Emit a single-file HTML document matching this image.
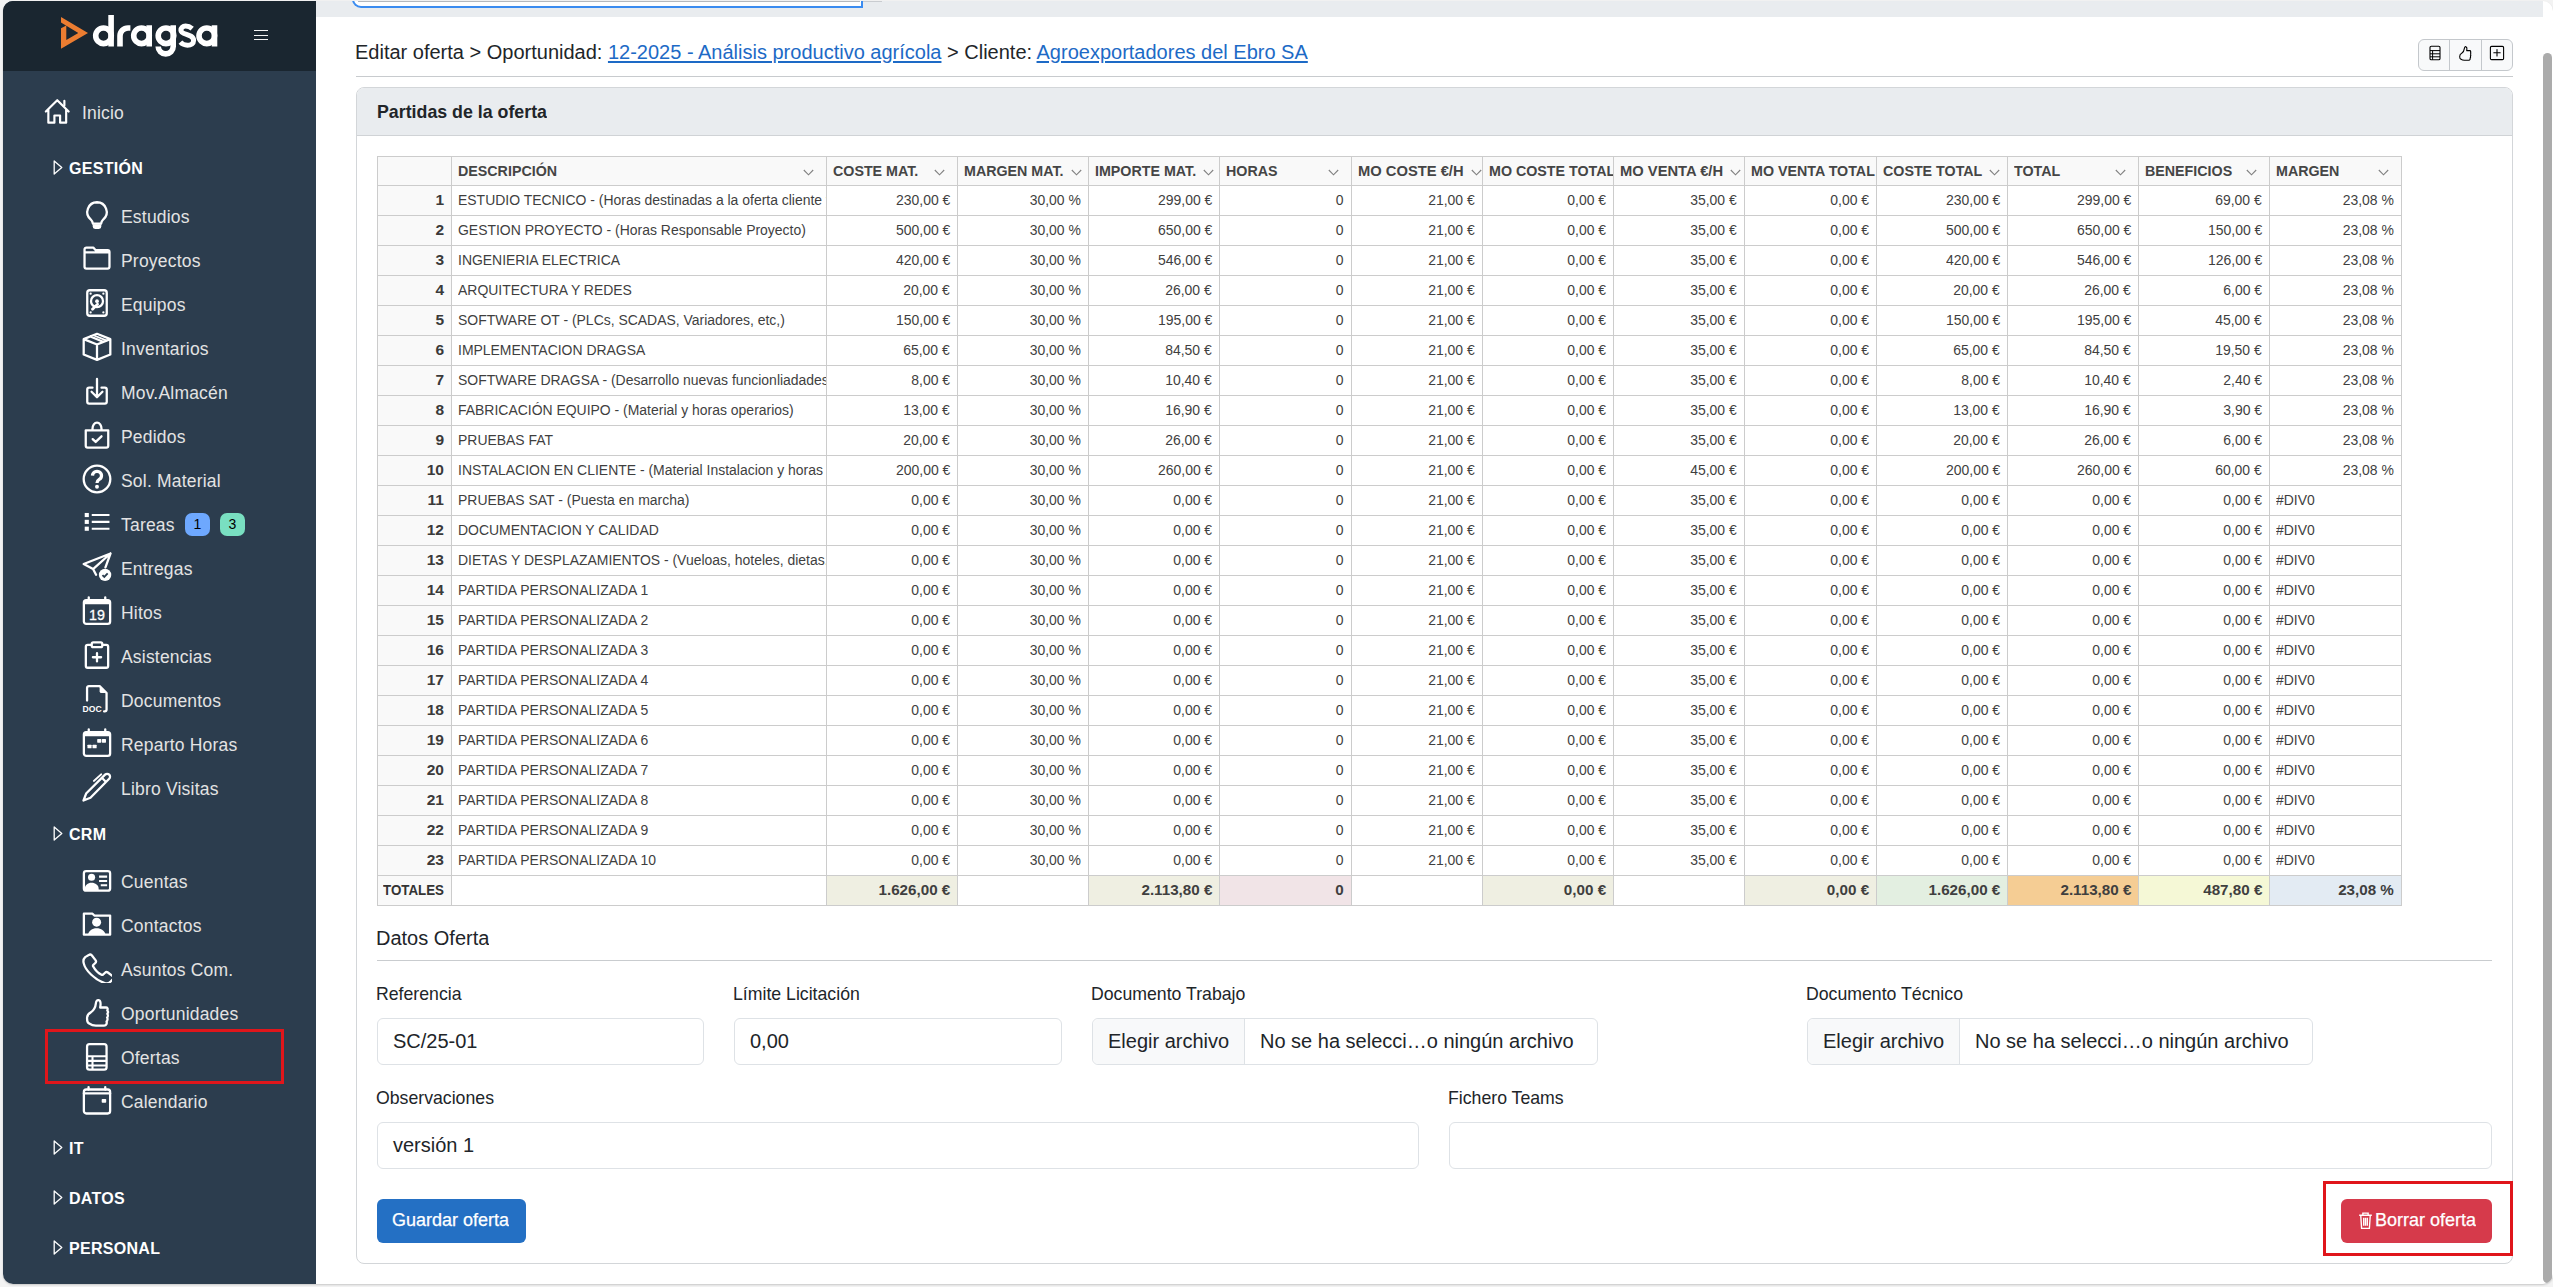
<!DOCTYPE html>
<html lang="es"><head><meta charset="utf-8"><title>Editar oferta</title>
<style>
*{box-sizing:border-box;margin:0;padding:0}
html,body{width:2553px;height:1287px;overflow:hidden;background:#f3f3f3;font-family:"Liberation Sans", sans-serif}
.abs{position:absolute}
#win{position:absolute;left:3px;top:1px;width:2550px;height:1283px;border-radius:10px;overflow:hidden;background:#fff;box-shadow:0 1px 2px rgba(0,0,0,.18)}
#sb{position:absolute;left:0;top:0;width:313px;height:1283px;background:#2c3d4e}
#sbh{position:absolute;left:0;top:0;width:313px;height:70px;background:#1a2630}
.it{position:absolute;left:118px;font-size:17.5px;color:#e3e3e3;white-space:nowrap;line-height:20px;letter-spacing:.2px}
.sec{position:absolute;left:66px;font-size:16px;font-weight:700;color:#fff;white-space:nowrap;line-height:20px;letter-spacing:.3px}
.ic{position:absolute;width:28px;height:28px}
.ic svg{width:100%;height:100%;display:block}
.tri{position:absolute;left:49.5px;width:10px;height:15px}
.badge{position:absolute;width:25px;height:23px;border-radius:7px;font-size:14px;font-weight:400;color:#000;text-align:center;line-height:23px}
.t{position:absolute;white-space:nowrap;overflow:hidden}

.tc{position:absolute;white-space:nowrap;font-size:15.5px;color:#3f3f3f;line-height:18px}
.tl{transform:scaleX(.9);transform-origin:0 50%}
.tr{transform:scaleX(.9);transform-origin:100% 50%;text-align:right}
.th{position:absolute;white-space:nowrap;font-size:15.5px;font-weight:700;color:#454545;line-height:18px;transform:scaleX(.92);transform-origin:0 50%}
.tb{font-weight:700;transform:scaleX(.88)}

.lbl{position:absolute;white-space:nowrap;font-size:17.7px;color:#212529;line-height:20px}
.inp{position:absolute;border:1px solid #dee2e6;border-radius:6px;background:#fff}
.itx{position:absolute;white-space:nowrap;font-size:20px;color:#212529;line-height:24px}
.fbtn{position:absolute;left:0;top:0;bottom:0;background:#f8f9fa;border-right:1px solid #dee2e6;border-radius:6px 0 0 6px}
</style></head><body>
<div id="win"><div id="sb"><div id="sbh"></div><svg class="abs" style="left:56px;top:14px" width="170" height="46" viewBox="0 0 170 46">
<path d="M2 2 L29 17.9 L2 33.8 Z M2 7.4 L19.3 18.1 L7.3 24.9 L7.3 10.6 L2 13.3 Z" fill="#ec7d31" fill-rule="evenodd"/>
<g fill="none" stroke="#fff" stroke-width="5.6" stroke-linecap="butt">
<circle cx="44.5" cy="20.8" r="7.8"/><path d="M52.1 0 V31.4"/>
<path d="M61 31.4 V21 A8 8 0 0 1 69 13 H71.4"/>
<circle cx="82.5" cy="20.8" r="7.8"/><path d="M90.2 10.2 V31.4"/>
<circle cx="107" cy="20.8" r="7.8"/><path d="M114.2 10.2 V31.4 A7.5 7.5 0 0 1 99.2 31.4"/>
<path stroke-width="5" d="M133.2 13.6 C131.2 11.9 128.8 11 126.6 11 C123.6 11 121.9 12.8 121.9 15.2 C121.9 20.2 134.6 18.6 134.6 25.4 C134.6 28.4 132.2 30.2 128.4 30.2 C125.6 30.2 123.2 29.2 121.4 27.2"/>
<circle cx="147.8" cy="20.8" r="7.8"/><path d="M155.5 10.2 V31.4"/>
</g>
</svg><div class="abs" style="left:251px;top:29px;width:14px;height:1px;background:#f4f4f4"></div><div class="abs" style="left:251px;top:34px;width:14px;height:1px;background:#f4f4f4"></div><div class="abs" style="left:251px;top:38px;width:14px;height:1px;background:#f4f4f4"></div><div class="ic" style="left:39.5px;top:96px;width:28.5px;height:28.5px"><svg viewBox="0 0 16 16" width="28.5" height="28.5"><path fill="none" stroke="#fff" stroke-width="1.22" stroke-linecap="round" stroke-linejoin="round" d="M1.6 8.2 L8 1.8 L14.4 8.2 M3 6.8 V14.4 H6.4 V10.4 H9.6 V14.4 H13 V6.8"/><path fill="none" stroke="#fff" stroke-width="1.22" stroke-linecap="round" stroke-linejoin="round" d="M12 2.2 V4.8"/></svg></div><div class="it" style="left:79px;top:102px">Inicio</div><svg class="tri" style="top:159px" viewBox="0 0 10 15"><path d="M1.2 1 L8.8 7.5 L1.2 14 Z" fill="none" stroke="#fff" stroke-width="1.3" stroke-linejoin="round"/></svg><div class="sec" style="top:158px">GESTIÓN</div><div class="ic" style="left:79.1px;top:199px;width:30px;height:30px"><svg viewBox="0 0 16 16" width="30" height="30"><path fill="none" stroke="#fff" stroke-width="1.22" stroke-linecap="round" stroke-linejoin="round" d="M8 1.2 a5.2 5.2 0 0 0-3.4 9.1 c.7.7 1.1 1.5 1.2 2.3 h4.4 c.1-.8.5-1.6 1.2-2.3 A5.2 5.2 0 0 0 8 1.2z"/><path fill="#fff" d="M5.7 12.9 h4.6 v1.2 a1.3 1.3 0 0 1-1.3 1.3 h-2 a1.3 1.3 0 0 1-1.3-1.3z"/></svg></div><div class="it" style="top:206px">Estudios</div><div class="ic" style="left:79.1px;top:243px;width:30px;height:30px"><svg viewBox="0 0 16 16" width="30" height="30"><path fill="none" stroke="#fff" stroke-width="1.22" stroke-linecap="round" stroke-linejoin="round" d="M1.35 12.1 V2.9 a1 1 0 0 1 1-1 H6 l1.3 1.4 H13.65 a1 1 0 0 1 1 1 V12.1 a1 1 0 0 1-1 1 H2.35 a1 1 0 0 1-1-1z M1.35 4.5 H14.65"/></svg></div><div class="it" style="top:250px">Proyectos</div><div class="ic" style="left:79.1px;top:287px;width:30px;height:30px"><svg viewBox="0 0 16 16" width="30" height="30"><rect fill="none" stroke="#fff" stroke-width="1.22" stroke-linecap="round" stroke-linejoin="round" x="2.8" y="1.2" width="10.4" height="13.6" rx="1.4"/><circle fill="none" stroke="#fff" stroke-width="1.22" stroke-linecap="round" stroke-linejoin="round" cx="8" cy="7" r="3.2"/><circle fill="#fff" cx="8" cy="7" r="1"/><path fill="none" stroke="#fff" stroke-width="1.5" stroke-linecap="round" d="M8.3 8.6 L5.6 11.3"/><circle fill="#fff" cx="4.6" cy="3" r=".6"/><circle fill="#fff" cx="11.4" cy="3" r=".6"/><circle fill="#fff" cx="4.6" cy="13" r=".6"/><circle fill="#fff" cx="11.4" cy="13" r=".6"/></svg></div><div class="it" style="top:294px">Equipos</div><div class="ic" style="left:79.1px;top:331px;width:30px;height:30px"><svg viewBox="0 0 16 16" width="30" height="30"><path fill="none" stroke="#fff" stroke-width="1.22" stroke-linecap="round" stroke-linejoin="round" d="M8 0.95 L15.1 3.8 V12 L8 14.85 L0.9 12 V3.8 Z M0.9 3.8 L8 6.7 L15.1 3.8 M8 6.7 V14.85 M4.45 2.4 L11.55 5.3"/><path fill="none" stroke="#fff" stroke-width=".9" d="M6.1 1.7 L13.2 4.6"/></svg></div><div class="it" style="top:338px">Inventarios</div><div class="ic" style="left:79.1px;top:375px;width:30px;height:30px"><svg viewBox="0 0 16 16" width="30" height="30"><path fill="none" stroke="#fff" stroke-width="1.22" stroke-linecap="round" stroke-linejoin="round" d="M5.6 6.2 H3.8 a1 1 0 0 0-1 1 V13.75 a1 1 0 0 0 1 1 H12.2 a1 1 0 0 0 1-1 V7.2 a1 1 0 0 0-1-1 H10.4 M8 1.6 V11.2 M5.1 8.4 L8 11.3 L10.9 8.4"/></svg></div><div class="it" style="top:382px">Mov.Almacén</div><div class="ic" style="left:79.1px;top:419px;width:30px;height:30px"><svg viewBox="0 0 16 16" width="30" height="30"><path fill="none" stroke="#fff" stroke-width="1.22" stroke-linecap="round" stroke-linejoin="round" d="M2 5.5 H14 V13.7 a1 1 0 0 1-1 1 H3 a1 1 0 0 1-1-1 Z M5.6 5.5 V4.7 a2.4 3.3 0 0 1 4.8 0 V5.5 M5.7 10.2 L7.3 11.7 L10.4 8.7"/></svg></div><div class="it" style="top:426px">Pedidos</div><div class="ic" style="left:79.1px;top:463px;width:30px;height:30px"><svg viewBox="0 0 16 16" width="30" height="30"><circle fill="none" stroke="#fff" stroke-width="1.22" stroke-linecap="round" stroke-linejoin="round" cx="8" cy="8" r="7.1"/><path fill="none" stroke="#fff" stroke-width="1.75" d="M5.6 6.2 a2.4 2.3 0 1 1 3.6 2 c-.8.5-1.2.9-1.2 1.9"/><circle fill="#fff" cx="8" cy="12.1" r="1.05"/></svg></div><div class="it" style="top:470px">Sol. Material</div><div class="ic" style="left:79.1px;top:507px;width:30px;height:30px"><svg viewBox="0 0 16 16" width="30" height="30"><path fill="none" stroke="#fff" stroke-width="1.15" d="M5.2 3.75 H14.65 M5.2 7.4 H14.65 M5.2 11.05 H14.65"/><rect fill="#fff" x="1.45" y="2.65" width="2.2" height="2.2"/><rect fill="#fff" x="1.45" y="6.3" width="2.2" height="2.2"/><rect fill="#fff" x="1.45" y="9.95" width="2.2" height="2.2"/></svg></div><div class="it" style="top:514px">Tareas</div><div class="ic" style="left:79.1px;top:551px;width:30px;height:30px"><svg viewBox="0 0 16 16" width="30" height="30"><path fill="none" stroke="#fff" stroke-width="1.22" stroke-linecap="round" stroke-linejoin="round" d="M15.2 0.8 L0.9 6.4 L5.9 9.1 L7.5 12.1 M15.2 0.8 L5.9 9.1 M15.2 0.8 L12.5 8.2"/><circle fill="#fff" cx="12.3" cy="12.2" r="3.3"/><path fill="none" stroke="#2c3d4e" stroke-width="1" d="M10.9 12.3 L11.9 13.3 L13.7 11.4"/></svg></div><div class="it" style="top:558px">Entregas</div><div class="ic" style="left:79.1px;top:595px;width:30px;height:30px"><svg viewBox="0 0 16 16" width="30" height="30"><rect fill="none" stroke="#fff" stroke-width="1.22" stroke-linecap="round" stroke-linejoin="round" x="1" y="2.2" width="14" height="12.65" rx="1.3"/><path fill="#fff" d="M1 3.1 a1.3 1.3 0 0 1 1.3-1.3 h11.4 a1.3 1.3 0 0 1 1.3 1.3 V4.4 H1z"/><path fill="none" stroke="#fff" stroke-width="1.22" stroke-linecap="round" stroke-linejoin="round" d="M3.6 0.7 V2 M12.4 0.7 V2"/><text x="8" y="12.9" font-family="Liberation Sans" font-size="7.6" text-anchor="middle" fill="#fff" stroke="#fff" stroke-width=".15">19</text></svg></div><div class="it" style="top:602px">Hitos</div><div class="ic" style="left:79.1px;top:639px;width:30px;height:30px"><svg viewBox="0 0 16 16" width="30" height="30"><path fill="none" stroke="#fff" stroke-width="1.22" stroke-linecap="round" stroke-linejoin="round" d="M4.8 2.6 H3.05 a1 1 0 0 0-1 1 V13.8 a1 1 0 0 0 1 1 H12.95 a1 1 0 0 0 1-1 V3.6 a1 1 0 0 0-1-1 H11.2"/><rect fill="none" stroke="#fff" stroke-width="1.2" x="5.2" y="1.2" width="5.6" height="2.6" rx=".8"/><path fill="none" stroke="#fff" stroke-width="1.22" stroke-linecap="round" stroke-linejoin="round" d="M8 7 V11.4 M5.8 9.2 H10.2"/></svg></div><div class="it" style="top:646px">Asistencias</div><div class="ic" style="left:79.1px;top:683px;width:30px;height:30px"><svg viewBox="0 0 16 16" width="30" height="30"><path fill="none" stroke="#fff" stroke-width="1.22" stroke-linecap="round" stroke-linejoin="round" d="M2.7 8.8 V2.1 a1 1 0 0 1 1-1 H9.4 L13.1 4.8 V13.6 a1 1 0 0 1-1 1 H11.8"/><path fill="#fff" d="M9.4 1.1 V3.8 a1 1 0 0 0 1 1 H13.1z"/><text x="0.25" y="15.1" font-family="Liberation Sans" font-weight="700" font-size="4.6" fill="#fff">DOC</text></svg></div><div class="it" style="top:690px">Documentos</div><div class="ic" style="left:79.1px;top:727px;width:30px;height:30px"><svg viewBox="0 0 16 16" width="30" height="30"><rect fill="none" stroke="#fff" stroke-width="1.22" stroke-linecap="round" stroke-linejoin="round" x="1" y="2.2" width="14" height="12.65" rx="1.3"/><path fill="#fff" d="M1 3.1 a1.3 1.3 0 0 1 1.3-1.3 h11.4 a1.3 1.3 0 0 1 1.3 1.3 V4.4 H1z"/><path fill="none" stroke="#fff" stroke-width="1.22" stroke-linecap="round" stroke-linejoin="round" d="M3.6 0.7 V2 M12.4 0.7 V2"/><rect fill="#fff" x="8.1" y="5.9" width="2.2" height="1.9" rx=".3"/><rect fill="#fff" x="10.6" y="5.9" width="2.2" height="1.9" rx=".3"/><rect fill="#fff" x="2.9" y="8.9" width="2.2" height="1.9" rx=".3"/><rect fill="#fff" x="5.6" y="8.9" width="2.2" height="1.9" rx=".3"/></svg></div><div class="it" style="top:734px">Reparto Horas</div><div class="ic" style="left:79.1px;top:771px;width:30px;height:30px"><svg viewBox="0 0 16 16" width="30" height="30"><path fill="none" stroke="#fff" stroke-width="1.22" stroke-linecap="round" stroke-linejoin="round" d="M12.3 1.4 a1.5 1.5 0 0 1 2.2 2.2 L4.5 13.7 L0.8 15.2 L2.2 11.5 Z M10.6 3.1 L12.8 5.3"/><path fill="none" stroke="#fff" stroke-width=".9" stroke-linecap="round" d="M6.3 4.8 L10.3 1.2"/></svg></div><div class="it" style="top:778px">Libro Visitas</div><div class="badge" style="left:182px;top:512px;background:#6ea8fe">1</div><div class="badge" style="left:217px;top:512px;background:#79dfc1">3</div><svg class="tri" style="top:825px" viewBox="0 0 10 15"><path d="M1.2 1 L8.8 7.5 L1.2 14 Z" fill="none" stroke="#fff" stroke-width="1.3" stroke-linejoin="round"/></svg><div class="sec" style="top:824px">CRM</div><div class="ic" style="left:79.1px;top:864px;width:30px;height:30px"><svg viewBox="0 0 16 16" width="30" height="30"><rect fill="none" stroke="#fff" stroke-width="1.22" stroke-linecap="round" stroke-linejoin="round" x="1" y="3.3" width="14" height="10.4" rx="1.2"/><circle fill="#fff" cx="5.1" cy="6.5" r="1.9"/><path fill="#fff" d="M1.5 13.7 V12.6 c0-1.9 1.6-3.2 3.6-3.2 s3.8 1.3 3.8 3.2 V13.7z"/><path fill="none" stroke="#fff" stroke-width="1.1" d="M9.1 6.2 H13.4 M9.1 8.5 H13.4 M10 10.8 H13.4"/></svg></div><div class="it" style="top:871px">Cuentas</div><div class="ic" style="left:79.1px;top:908px;width:30px;height:30px"><svg viewBox="0 0 16 16" width="30" height="30"><path fill="none" stroke="#fff" stroke-width="1.22" stroke-linecap="round" stroke-linejoin="round" d="M1 2.5 H5.6 L6.6 3.5 H15 V13.7 H1 Z"/><circle fill="#fff" cx="7.8" cy="7" r="2.4"/><path fill="#fff" d="M3.2 13.7 c.4-2.2 2.2-3.5 4.6-3.5 s4.3 1.3 4.8 3.5z"/></svg></div><div class="it" style="top:915px">Contactos</div><div class="ic" style="left:79.1px;top:952px;width:30px;height:30px"><svg viewBox="0 0 16 16" width="30" height="30"><path fill="none" stroke="#fff" stroke-width="1.22" stroke-linecap="round" stroke-linejoin="round" d="M3.6 1.1 c.5-.4 1.2-.3 1.6.1 l2 2.6 c.4.5.3 1.1-.1 1.5 l-1 1 c-.3.3-.3.6-.1.9 c1 1.9 2.4 3.4 4.4 4.4 c.3.2.6.1.9-.1 l1-1 c.4-.4 1-.5 1.5-.1 l2.6 2 c.5.4.5 1.1.1 1.6 l-1.2 1.2 c-.8.8-2.1 1.2-3.2.8 C6.8 14.3 1.7 9.2.9 5.4 c-.3-1.1 0-2.4.8-3.2z"/></svg></div><div class="it" style="top:959px">Asuntos Com.</div><div class="ic" style="left:79.1px;top:996px;width:30px;height:30px"><svg viewBox="0 0 16 16" width="30" height="30"><path fill="none" stroke="#fff" stroke-width="1.22" stroke-linecap="round" stroke-linejoin="round" d="M8.9 1.7 C9.9 1.9 10.1 3.4 9.7 5.6 H12.9 C13.8 5.6 13.8 6.5 13.5 7.2 C13.9 7.6 13.9 8.5 13.5 9 C13.9 9.5 13.9 10.5 13.4 11 C13.8 11.5 13.6 12.6 13.1 13 C13.4 14 13 15.3 11.8 15.3 H7.4 C5.8 15.3 4.5 14.6 3.6 14 C2.9 13.6 2.7 12.5 2.7 11.4 C2.7 10 3.4 8.8 4.7 8.2 C6.3 7.1 7.2 5.3 7.4 3.4 C7.5 2.2 8.1 1.5 8.9 1.7z"/></svg></div><div class="it" style="top:1003px">Oportunidades</div><div class="ic" style="left:79.1px;top:1040px;width:30px;height:30px"><svg viewBox="0 0 16 16" width="30" height="30"><rect fill="none" stroke="#fff" stroke-width="1.22" stroke-linecap="round" stroke-linejoin="round" x="2.7" y="1.7" width="10.4" height="13.6" rx="1.3"/><path fill="none" stroke="#fff" stroke-width="1.1" d="M2.7 8.1 H13.1 M2.7 10.6 H13.1 M2.7 13.1 H13.1 M5.6 8.1 V15.3"/></svg></div><div class="it" style="top:1047px">Ofertas</div><div class="ic" style="left:79.1px;top:1084px;width:30px;height:30px"><svg viewBox="0 0 16 16" width="30" height="30"><rect fill="none" stroke="#fff" stroke-width="1.22" stroke-linecap="round" stroke-linejoin="round" x="1" y="2.4" width="14" height="12.8" rx="1.3"/><path fill="none" stroke="#fff" stroke-width="1.22" stroke-linecap="round" stroke-linejoin="round" d="M1 4.5 H15 M3.5 1.1 V2.4 M12.4 1.1 V2.4"/><rect fill="#fff" x="10.5" y="7.5" width="2.4" height="1.9" rx=".4"/></svg></div><div class="it" style="top:1091px">Calendario</div><svg class="tri" style="top:1139px" viewBox="0 0 10 15"><path d="M1.2 1 L8.8 7.5 L1.2 14 Z" fill="none" stroke="#fff" stroke-width="1.3" stroke-linejoin="round"/></svg><div class="sec" style="top:1138px">IT</div><svg class="tri" style="top:1189px" viewBox="0 0 10 15"><path d="M1.2 1 L8.8 7.5 L1.2 14 Z" fill="none" stroke="#fff" stroke-width="1.3" stroke-linejoin="round"/></svg><div class="sec" style="top:1188px">DATOS</div><svg class="tri" style="top:1239px" viewBox="0 0 10 15"><path d="M1.2 1 L8.8 7.5 L1.2 14 Z" fill="none" stroke="#fff" stroke-width="1.3" stroke-linejoin="round"/></svg><div class="sec" style="top:1238px">PERSONAL</div><div class="abs" style="left:42px;top:1028px;width:239px;height:55px;border:3px solid #e0161b"></div></div><div class="abs" style="left:313px;top:0;width:2227px;height:16px;background:#e9ecef"></div><div class="abs" style="left:349px;top:-10px;width:511px;height:16.5px;border:2.5px solid #3b8cf0;border-top:none;border-radius:0 0 0 9px;background:#fff"></div><div class="abs" style="left:355px;top:0px;width:502px;height:1px;background:#b4b8bd"></div><div class="abs" style="left:860px;top:0px;width:19px;height:1px;background:#c9ccd0"></div><div class="abs" style="left:2540px;top:52px;width:9px;height:1230px;border-radius:5px;background:#ababab"></div><div class="t" style="left:352px;top:39px;font-size:20px;line-height:24px;color:#212529">Editar oferta &gt; Oportunidad: <span style="color:#1d6ac6;text-decoration:underline;text-underline-offset:2px">12-2025 - Análisis productivo agrícola</span> &gt; Cliente: <span style="color:#1d6ac6;text-decoration:underline;text-underline-offset:2px">Agroexportadores del Ebro SA</span></div><div class="abs" style="left:2415px;top:38px;width:95px;height:32px;border:1px solid #c4c8cc;border-radius:6px;background:#f8f9fa"></div><div class="abs" style="left:2446px;top:38px;width:1px;height:32px;background:#c4c8cc"></div><div class="abs" style="left:2478px;top:38px;width:1px;height:32px;background:#c4c8cc"></div><svg class="abs" style="left:2423.5px;top:44px" width="16" height="16" viewBox="0 0 16 16"><rect fill="none" stroke="#000" stroke-width="1.1" stroke-linecap="round" stroke-linejoin="round" x="3" y="1.2" width="10" height="13.6" rx="1.3"/><path fill="none" stroke="#000" stroke-width="1" d="M3 5.6 H13 M3 8.8 H13 M3 11.8 H13 M5.6 5.6 V14.8"/></svg><svg class="abs" style="left:2454px;top:44px" width="16" height="16" viewBox="0 0 16 16"><path fill="none" stroke="#000" stroke-width="1.1" stroke-linecap="round" stroke-linejoin="round" d="M8.9 1.7 C9.9 1.9 10.1 3.4 9.7 5.6 H12.9 C13.8 5.6 13.8 6.5 13.5 7.2 C13.9 7.6 13.9 8.5 13.5 9 C13.9 9.5 13.9 10.5 13.4 11 C13.8 11.5 13.6 12.6 13.1 13 C13.4 14 13 15.3 11.8 15.3 H7.4 C5.8 15.3 4.5 14.6 3.6 14 C2.9 13.6 2.7 12.5 2.7 11.4 C2.7 10 3.4 8.8 4.7 8.2 C6.3 7.1 7.2 5.3 7.4 3.4 C7.5 2.2 8.1 1.5 8.9 1.7z"/></svg><svg class="abs" style="left:2485.5px;top:44px" width="16" height="16" viewBox="0 0 16 16"><rect fill="none" stroke="#000" stroke-width="1.1" stroke-linecap="round" stroke-linejoin="round" x="1.4" y="1.4" width="13.2" height="13.2" rx="1.2"/><path fill="none" stroke="#000" stroke-width="1.1" stroke-linecap="round" stroke-linejoin="round" d="M8 4.6 V11 M4.8 7.8 H11.2"/></svg><div class="abs" style="left:353px;top:75px;width:2157px;height:1px;background:#c8cbce"></div><div class="abs" style="left:353px;top:86px;width:2157px;height:1177px;border:1px solid #d3d6d9;border-radius:8px;overflow:hidden"><div class="abs" style="left:0;top:0;width:100%;height:48px;background:#e9ecef;border-bottom:1px solid #d0d3d6"></div><div class="t" style="left:20px;top:13px;font-size:17.8px;font-weight:700;line-height:22px;color:#212529">Partidas de la oferta</div></div><div class="abs" style="left:374px;top:155px;width:2024px;height:29px;background:#f9f9f9"></div><div class="abs" style="left:374px;top:184px;width:74px;height:720px;background:#f9f9f9"></div><div class="abs" style="left:823px;top:874px;width:131px;height:30px;background:#efefe2"></div><div class="abs" style="left:1085px;top:874px;width:131px;height:30px;background:#efefe2"></div><div class="abs" style="left:1216px;top:874px;width:132px;height:30px;background:#f1e4e7"></div><div class="abs" style="left:1479px;top:874px;width:131px;height:30px;background:#efefe2"></div><div class="abs" style="left:1741px;top:874px;width:132px;height:30px;background:#efefe2"></div><div class="abs" style="left:1873px;top:874px;width:131px;height:30px;background:#e3efe1"></div><div class="abs" style="left:2004px;top:874px;width:131px;height:30px;background:#f5cd94"></div><div class="abs" style="left:2135px;top:874px;width:131px;height:30px;background:#f5f8d6"></div><div class="abs" style="left:2266px;top:874px;width:132px;height:30px;background:#e3ebf3"></div><div class="abs" style="left:374px;top:155px;width:1px;height:750px;background:#cccccc"></div><div class="abs" style="left:448px;top:155px;width:1px;height:750px;background:#cccccc"></div><div class="abs" style="left:823px;top:155px;width:1px;height:750px;background:#cccccc"></div><div class="abs" style="left:954px;top:155px;width:1px;height:750px;background:#cccccc"></div><div class="abs" style="left:1085px;top:155px;width:1px;height:750px;background:#cccccc"></div><div class="abs" style="left:1216px;top:155px;width:1px;height:750px;background:#cccccc"></div><div class="abs" style="left:1348px;top:155px;width:1px;height:750px;background:#cccccc"></div><div class="abs" style="left:1479px;top:155px;width:1px;height:750px;background:#cccccc"></div><div class="abs" style="left:1610px;top:155px;width:1px;height:750px;background:#cccccc"></div><div class="abs" style="left:1741px;top:155px;width:1px;height:750px;background:#cccccc"></div><div class="abs" style="left:1873px;top:155px;width:1px;height:750px;background:#cccccc"></div><div class="abs" style="left:2004px;top:155px;width:1px;height:750px;background:#cccccc"></div><div class="abs" style="left:2135px;top:155px;width:1px;height:750px;background:#cccccc"></div><div class="abs" style="left:2266px;top:155px;width:1px;height:750px;background:#cccccc"></div><div class="abs" style="left:2398px;top:155px;width:1px;height:750px;background:#cccccc"></div><div class="abs" style="left:374px;top:155px;width:2025px;height:1px;background:#cccccc"></div><div class="abs" style="left:374px;top:184px;width:2025px;height:1px;background:#cccccc"></div><div class="abs" style="left:374px;top:214px;width:2025px;height:1px;background:#cccccc"></div><div class="abs" style="left:374px;top:244px;width:2025px;height:1px;background:#cccccc"></div><div class="abs" style="left:374px;top:274px;width:2025px;height:1px;background:#cccccc"></div><div class="abs" style="left:374px;top:304px;width:2025px;height:1px;background:#cccccc"></div><div class="abs" style="left:374px;top:334px;width:2025px;height:1px;background:#cccccc"></div><div class="abs" style="left:374px;top:364px;width:2025px;height:1px;background:#cccccc"></div><div class="abs" style="left:374px;top:394px;width:2025px;height:1px;background:#cccccc"></div><div class="abs" style="left:374px;top:424px;width:2025px;height:1px;background:#cccccc"></div><div class="abs" style="left:374px;top:454px;width:2025px;height:1px;background:#cccccc"></div><div class="abs" style="left:374px;top:484px;width:2025px;height:1px;background:#cccccc"></div><div class="abs" style="left:374px;top:514px;width:2025px;height:1px;background:#cccccc"></div><div class="abs" style="left:374px;top:544px;width:2025px;height:1px;background:#cccccc"></div><div class="abs" style="left:374px;top:574px;width:2025px;height:1px;background:#cccccc"></div><div class="abs" style="left:374px;top:604px;width:2025px;height:1px;background:#cccccc"></div><div class="abs" style="left:374px;top:634px;width:2025px;height:1px;background:#cccccc"></div><div class="abs" style="left:374px;top:664px;width:2025px;height:1px;background:#cccccc"></div><div class="abs" style="left:374px;top:694px;width:2025px;height:1px;background:#cccccc"></div><div class="abs" style="left:374px;top:724px;width:2025px;height:1px;background:#cccccc"></div><div class="abs" style="left:374px;top:754px;width:2025px;height:1px;background:#cccccc"></div><div class="abs" style="left:374px;top:784px;width:2025px;height:1px;background:#cccccc"></div><div class="abs" style="left:374px;top:814px;width:2025px;height:1px;background:#cccccc"></div><div class="abs" style="left:374px;top:844px;width:2025px;height:1px;background:#cccccc"></div><div class="abs" style="left:374px;top:874px;width:2025px;height:1px;background:#cccccc"></div><div class="abs" style="left:374px;top:904px;width:2025px;height:1px;background:#cccccc"></div><div class="abs" style="left:449px;top:156px;width:374px;height:28px;overflow:hidden"><svg class="abs" style="left:350.5px;top:12px" width="11" height="7" viewBox="0 0 11 7"><path d="M.8 1 L5.5 5.8 L10.2 1" fill="none" stroke="#808080" stroke-width="1.1"/></svg><div class="th" style="left:6px;top:5px;transform:scaleX(0.92)">DESCRIPCIÓN</div></div><div class="abs" style="left:824px;top:156px;width:130px;height:28px;overflow:hidden"><svg class="abs" style="left:106.5px;top:12px" width="11" height="7" viewBox="0 0 11 7"><path d="M.8 1 L5.5 5.8 L10.2 1" fill="none" stroke="#808080" stroke-width="1.1"/></svg><div class="th" style="left:6px;top:5px;transform:scaleX(0.92)">COSTE MAT.</div></div><div class="abs" style="left:955px;top:156px;width:130px;height:28px;overflow:hidden"><svg class="abs" style="left:112.6px;top:12px" width="11" height="7" viewBox="0 0 11 7"><path d="M.8 1 L5.5 5.8 L10.2 1" fill="none" stroke="#808080" stroke-width="1.1"/></svg><div class="th" style="left:6px;top:5px;transform:scaleX(0.92)">MARGEN MAT.</div></div><div class="abs" style="left:1086px;top:156px;width:130px;height:28px;overflow:hidden"><svg class="abs" style="left:114.1px;top:12px" width="11" height="7" viewBox="0 0 11 7"><path d="M.8 1 L5.5 5.8 L10.2 1" fill="none" stroke="#808080" stroke-width="1.1"/></svg><div class="th" style="left:6px;top:5px;transform:scaleX(0.92)">IMPORTE MAT.</div></div><div class="abs" style="left:1217px;top:156px;width:131px;height:28px;overflow:hidden"><svg class="abs" style="left:107.5px;top:12px" width="11" height="7" viewBox="0 0 11 7"><path d="M.8 1 L5.5 5.8 L10.2 1" fill="none" stroke="#808080" stroke-width="1.1"/></svg><div class="th" style="left:6px;top:5px;transform:scaleX(0.92)">HORAS</div></div><div class="abs" style="left:1349px;top:156px;width:130px;height:28px;overflow:hidden"><svg class="abs" style="left:118.6px;top:12px" width="11" height="7" viewBox="0 0 11 7"><path d="M.8 1 L5.5 5.8 L10.2 1" fill="none" stroke="#808080" stroke-width="1.1"/></svg><div class="th" style="left:6px;top:5px;transform:scaleX(0.95)">MO COSTE €/H</div></div><div class="abs" style="left:1480px;top:156px;width:130px;height:28px;overflow:hidden"><svg class="abs" style="left:139.2px;top:12px" width="11" height="7" viewBox="0 0 11 7"><path d="M.8 1 L5.5 5.8 L10.2 1" fill="none" stroke="#808080" stroke-width="1.1"/></svg><div class="th" style="left:6px;top:5px;transform:scaleX(0.92)">MO COSTE TOTAL</div></div><div class="abs" style="left:1611px;top:156px;width:130px;height:28px;overflow:hidden"><svg class="abs" style="left:116.1px;top:12px" width="11" height="7" viewBox="0 0 11 7"><path d="M.8 1 L5.5 5.8 L10.2 1" fill="none" stroke="#808080" stroke-width="1.1"/></svg><div class="th" style="left:6px;top:5px;transform:scaleX(0.95)">MO VENTA €/H</div></div><div class="abs" style="left:1742px;top:156px;width:131px;height:28px;overflow:hidden"><svg class="abs" style="left:136.9px;top:12px" width="11" height="7" viewBox="0 0 11 7"><path d="M.8 1 L5.5 5.8 L10.2 1" fill="none" stroke="#808080" stroke-width="1.1"/></svg><div class="th" style="left:6px;top:5px;transform:scaleX(0.92)">MO VENTA TOTAL</div></div><div class="abs" style="left:1874px;top:156px;width:130px;height:28px;overflow:hidden"><svg class="abs" style="left:112.3px;top:12px" width="11" height="7" viewBox="0 0 11 7"><path d="M.8 1 L5.5 5.8 L10.2 1" fill="none" stroke="#808080" stroke-width="1.1"/></svg><div class="th" style="left:6px;top:5px;transform:scaleX(0.92)">COSTE TOTAL</div></div><div class="abs" style="left:2005px;top:156px;width:130px;height:28px;overflow:hidden"><svg class="abs" style="left:106.5px;top:12px" width="11" height="7" viewBox="0 0 11 7"><path d="M.8 1 L5.5 5.8 L10.2 1" fill="none" stroke="#808080" stroke-width="1.1"/></svg><div class="th" style="left:6px;top:5px;transform:scaleX(0.92)">TOTAL</div></div><div class="abs" style="left:2136px;top:156px;width:130px;height:28px;overflow:hidden"><svg class="abs" style="left:106.5px;top:12px" width="11" height="7" viewBox="0 0 11 7"><path d="M.8 1 L5.5 5.8 L10.2 1" fill="none" stroke="#808080" stroke-width="1.1"/></svg><div class="th" style="left:6px;top:5px;transform:scaleX(0.92)">BENEFICIOS</div></div><div class="abs" style="left:2267px;top:156px;width:131px;height:28px;overflow:hidden"><svg class="abs" style="left:107.5px;top:12px" width="11" height="7" viewBox="0 0 11 7"><path d="M.8 1 L5.5 5.8 L10.2 1" fill="none" stroke="#808080" stroke-width="1.1"/></svg><div class="th" style="left:6px;top:5px;transform:scaleX(0.92)">MARGEN</div></div><div class="tc tr tb" style="right:2109px;top:189.5px;color:#3a3a3a;transform:none;font-size:15.5px">1</div><div class="abs" style="left:449px;top:185px;width:374px;height:29px;overflow:hidden"><div class="tc tl" style="left:6px;top:4.5px">ESTUDIO TECNICO - (Horas destinadas a la oferta cliente y visitas)</div></div><div class="tc tr" style="right:1603px;top:189.5px;">230,00 €</div><div class="tc tr" style="right:1472px;top:189.5px;">30,00 %</div><div class="tc tr" style="right:1341px;top:189.5px;">299,00 €</div><div class="tc tr" style="right:1209px;top:189.5px;">0</div><div class="tc tr" style="right:1078px;top:189.5px;">21,00 €</div><div class="tc tr" style="right:947px;top:189.5px;">0,00 €</div><div class="tc tr" style="right:816px;top:189.5px;">35,00 €</div><div class="tc tr" style="right:684px;top:189.5px;">0,00 €</div><div class="tc tr" style="right:553px;top:189.5px;">230,00 €</div><div class="tc tr" style="right:422px;top:189.5px;">299,00 €</div><div class="tc tr" style="right:291px;top:189.5px;">69,00 €</div><div class="tc tr" style="right:159px;top:189.5px;">23,08 %</div><div class="tc tr tb" style="right:2109px;top:219.5px;color:#3a3a3a;transform:none;font-size:15.5px">2</div><div class="abs" style="left:449px;top:215px;width:374px;height:29px;overflow:hidden"><div class="tc tl" style="left:6px;top:4.5px">GESTION PROYECTO - (Horas Responsable Proyecto)</div></div><div class="tc tr" style="right:1603px;top:219.5px;">500,00 €</div><div class="tc tr" style="right:1472px;top:219.5px;">30,00 %</div><div class="tc tr" style="right:1341px;top:219.5px;">650,00 €</div><div class="tc tr" style="right:1209px;top:219.5px;">0</div><div class="tc tr" style="right:1078px;top:219.5px;">21,00 €</div><div class="tc tr" style="right:947px;top:219.5px;">0,00 €</div><div class="tc tr" style="right:816px;top:219.5px;">35,00 €</div><div class="tc tr" style="right:684px;top:219.5px;">0,00 €</div><div class="tc tr" style="right:553px;top:219.5px;">500,00 €</div><div class="tc tr" style="right:422px;top:219.5px;">650,00 €</div><div class="tc tr" style="right:291px;top:219.5px;">150,00 €</div><div class="tc tr" style="right:159px;top:219.5px;">23,08 %</div><div class="tc tr tb" style="right:2109px;top:249.5px;color:#3a3a3a;transform:none;font-size:15.5px">3</div><div class="abs" style="left:449px;top:245px;width:374px;height:29px;overflow:hidden"><div class="tc tl" style="left:6px;top:4.5px">INGENIERIA ELECTRICA</div></div><div class="tc tr" style="right:1603px;top:249.5px;">420,00 €</div><div class="tc tr" style="right:1472px;top:249.5px;">30,00 %</div><div class="tc tr" style="right:1341px;top:249.5px;">546,00 €</div><div class="tc tr" style="right:1209px;top:249.5px;">0</div><div class="tc tr" style="right:1078px;top:249.5px;">21,00 €</div><div class="tc tr" style="right:947px;top:249.5px;">0,00 €</div><div class="tc tr" style="right:816px;top:249.5px;">35,00 €</div><div class="tc tr" style="right:684px;top:249.5px;">0,00 €</div><div class="tc tr" style="right:553px;top:249.5px;">420,00 €</div><div class="tc tr" style="right:422px;top:249.5px;">546,00 €</div><div class="tc tr" style="right:291px;top:249.5px;">126,00 €</div><div class="tc tr" style="right:159px;top:249.5px;">23,08 %</div><div class="tc tr tb" style="right:2109px;top:279.5px;color:#3a3a3a;transform:none;font-size:15.5px">4</div><div class="abs" style="left:449px;top:275px;width:374px;height:29px;overflow:hidden"><div class="tc tl" style="left:6px;top:4.5px">ARQUITECTURA Y REDES</div></div><div class="tc tr" style="right:1603px;top:279.5px;">20,00 €</div><div class="tc tr" style="right:1472px;top:279.5px;">30,00 %</div><div class="tc tr" style="right:1341px;top:279.5px;">26,00 €</div><div class="tc tr" style="right:1209px;top:279.5px;">0</div><div class="tc tr" style="right:1078px;top:279.5px;">21,00 €</div><div class="tc tr" style="right:947px;top:279.5px;">0,00 €</div><div class="tc tr" style="right:816px;top:279.5px;">35,00 €</div><div class="tc tr" style="right:684px;top:279.5px;">0,00 €</div><div class="tc tr" style="right:553px;top:279.5px;">20,00 €</div><div class="tc tr" style="right:422px;top:279.5px;">26,00 €</div><div class="tc tr" style="right:291px;top:279.5px;">6,00 €</div><div class="tc tr" style="right:159px;top:279.5px;">23,08 %</div><div class="tc tr tb" style="right:2109px;top:309.5px;color:#3a3a3a;transform:none;font-size:15.5px">5</div><div class="abs" style="left:449px;top:305px;width:374px;height:29px;overflow:hidden"><div class="tc tl" style="left:6px;top:4.5px">SOFTWARE OT - (PLCs, SCADAS, Variadores, etc,)</div></div><div class="tc tr" style="right:1603px;top:309.5px;">150,00 €</div><div class="tc tr" style="right:1472px;top:309.5px;">30,00 %</div><div class="tc tr" style="right:1341px;top:309.5px;">195,00 €</div><div class="tc tr" style="right:1209px;top:309.5px;">0</div><div class="tc tr" style="right:1078px;top:309.5px;">21,00 €</div><div class="tc tr" style="right:947px;top:309.5px;">0,00 €</div><div class="tc tr" style="right:816px;top:309.5px;">35,00 €</div><div class="tc tr" style="right:684px;top:309.5px;">0,00 €</div><div class="tc tr" style="right:553px;top:309.5px;">150,00 €</div><div class="tc tr" style="right:422px;top:309.5px;">195,00 €</div><div class="tc tr" style="right:291px;top:309.5px;">45,00 €</div><div class="tc tr" style="right:159px;top:309.5px;">23,08 %</div><div class="tc tr tb" style="right:2109px;top:339.5px;color:#3a3a3a;transform:none;font-size:15.5px">6</div><div class="abs" style="left:449px;top:335px;width:374px;height:29px;overflow:hidden"><div class="tc tl" style="left:6px;top:4.5px">IMPLEMENTACION DRAGSA</div></div><div class="tc tr" style="right:1603px;top:339.5px;">65,00 €</div><div class="tc tr" style="right:1472px;top:339.5px;">30,00 %</div><div class="tc tr" style="right:1341px;top:339.5px;">84,50 €</div><div class="tc tr" style="right:1209px;top:339.5px;">0</div><div class="tc tr" style="right:1078px;top:339.5px;">21,00 €</div><div class="tc tr" style="right:947px;top:339.5px;">0,00 €</div><div class="tc tr" style="right:816px;top:339.5px;">35,00 €</div><div class="tc tr" style="right:684px;top:339.5px;">0,00 €</div><div class="tc tr" style="right:553px;top:339.5px;">65,00 €</div><div class="tc tr" style="right:422px;top:339.5px;">84,50 €</div><div class="tc tr" style="right:291px;top:339.5px;">19,50 €</div><div class="tc tr" style="right:159px;top:339.5px;">23,08 %</div><div class="tc tr tb" style="right:2109px;top:369.5px;color:#3a3a3a;transform:none;font-size:15.5px">7</div><div class="abs" style="left:449px;top:365px;width:374px;height:29px;overflow:hidden"><div class="tc tl" style="left:6px;top:4.5px">SOFTWARE DRAGSA - (Desarrollo nuevas funcionliadades)</div></div><div class="tc tr" style="right:1603px;top:369.5px;">8,00 €</div><div class="tc tr" style="right:1472px;top:369.5px;">30,00 %</div><div class="tc tr" style="right:1341px;top:369.5px;">10,40 €</div><div class="tc tr" style="right:1209px;top:369.5px;">0</div><div class="tc tr" style="right:1078px;top:369.5px;">21,00 €</div><div class="tc tr" style="right:947px;top:369.5px;">0,00 €</div><div class="tc tr" style="right:816px;top:369.5px;">35,00 €</div><div class="tc tr" style="right:684px;top:369.5px;">0,00 €</div><div class="tc tr" style="right:553px;top:369.5px;">8,00 €</div><div class="tc tr" style="right:422px;top:369.5px;">10,40 €</div><div class="tc tr" style="right:291px;top:369.5px;">2,40 €</div><div class="tc tr" style="right:159px;top:369.5px;">23,08 %</div><div class="tc tr tb" style="right:2109px;top:399.5px;color:#3a3a3a;transform:none;font-size:15.5px">8</div><div class="abs" style="left:449px;top:395px;width:374px;height:29px;overflow:hidden"><div class="tc tl" style="left:6px;top:4.5px">FABRICACIÓN EQUIPO - (Material y horas operarios)</div></div><div class="tc tr" style="right:1603px;top:399.5px;">13,00 €</div><div class="tc tr" style="right:1472px;top:399.5px;">30,00 %</div><div class="tc tr" style="right:1341px;top:399.5px;">16,90 €</div><div class="tc tr" style="right:1209px;top:399.5px;">0</div><div class="tc tr" style="right:1078px;top:399.5px;">21,00 €</div><div class="tc tr" style="right:947px;top:399.5px;">0,00 €</div><div class="tc tr" style="right:816px;top:399.5px;">35,00 €</div><div class="tc tr" style="right:684px;top:399.5px;">0,00 €</div><div class="tc tr" style="right:553px;top:399.5px;">13,00 €</div><div class="tc tr" style="right:422px;top:399.5px;">16,90 €</div><div class="tc tr" style="right:291px;top:399.5px;">3,90 €</div><div class="tc tr" style="right:159px;top:399.5px;">23,08 %</div><div class="tc tr tb" style="right:2109px;top:429.5px;color:#3a3a3a;transform:none;font-size:15.5px">9</div><div class="abs" style="left:449px;top:425px;width:374px;height:29px;overflow:hidden"><div class="tc tl" style="left:6px;top:4.5px">PRUEBAS FAT</div></div><div class="tc tr" style="right:1603px;top:429.5px;">20,00 €</div><div class="tc tr" style="right:1472px;top:429.5px;">30,00 %</div><div class="tc tr" style="right:1341px;top:429.5px;">26,00 €</div><div class="tc tr" style="right:1209px;top:429.5px;">0</div><div class="tc tr" style="right:1078px;top:429.5px;">21,00 €</div><div class="tc tr" style="right:947px;top:429.5px;">0,00 €</div><div class="tc tr" style="right:816px;top:429.5px;">35,00 €</div><div class="tc tr" style="right:684px;top:429.5px;">0,00 €</div><div class="tc tr" style="right:553px;top:429.5px;">20,00 €</div><div class="tc tr" style="right:422px;top:429.5px;">26,00 €</div><div class="tc tr" style="right:291px;top:429.5px;">6,00 €</div><div class="tc tr" style="right:159px;top:429.5px;">23,08 %</div><div class="tc tr tb" style="right:2109px;top:459.5px;color:#3a3a3a;transform:none;font-size:15.5px">10</div><div class="abs" style="left:449px;top:455px;width:374px;height:29px;overflow:hidden"><div class="tc tl" style="left:6px;top:4.5px">INSTALACION EN CLIENTE - (Material Instalacion y horas de montaje)</div></div><div class="tc tr" style="right:1603px;top:459.5px;">200,00 €</div><div class="tc tr" style="right:1472px;top:459.5px;">30,00 %</div><div class="tc tr" style="right:1341px;top:459.5px;">260,00 €</div><div class="tc tr" style="right:1209px;top:459.5px;">0</div><div class="tc tr" style="right:1078px;top:459.5px;">21,00 €</div><div class="tc tr" style="right:947px;top:459.5px;">0,00 €</div><div class="tc tr" style="right:816px;top:459.5px;">45,00 €</div><div class="tc tr" style="right:684px;top:459.5px;">0,00 €</div><div class="tc tr" style="right:553px;top:459.5px;">200,00 €</div><div class="tc tr" style="right:422px;top:459.5px;">260,00 €</div><div class="tc tr" style="right:291px;top:459.5px;">60,00 €</div><div class="tc tr" style="right:159px;top:459.5px;">23,08 %</div><div class="tc tr tb" style="right:2109px;top:489.5px;color:#3a3a3a;transform:none;font-size:15.5px">11</div><div class="abs" style="left:449px;top:485px;width:374px;height:29px;overflow:hidden"><div class="tc tl" style="left:6px;top:4.5px">PRUEBAS SAT - (Puesta en marcha)</div></div><div class="tc tr" style="right:1603px;top:489.5px;">0,00 €</div><div class="tc tr" style="right:1472px;top:489.5px;">30,00 %</div><div class="tc tr" style="right:1341px;top:489.5px;">0,00 €</div><div class="tc tr" style="right:1209px;top:489.5px;">0</div><div class="tc tr" style="right:1078px;top:489.5px;">21,00 €</div><div class="tc tr" style="right:947px;top:489.5px;">0,00 €</div><div class="tc tr" style="right:816px;top:489.5px;">35,00 €</div><div class="tc tr" style="right:684px;top:489.5px;">0,00 €</div><div class="tc tr" style="right:553px;top:489.5px;">0,00 €</div><div class="tc tr" style="right:422px;top:489.5px;">0,00 €</div><div class="tc tr" style="right:291px;top:489.5px;">0,00 €</div><div class="tc tl" style="left:2273px;top:489.5px">#DIV0</div><div class="tc tr tb" style="right:2109px;top:519.5px;color:#3a3a3a;transform:none;font-size:15.5px">12</div><div class="abs" style="left:449px;top:515px;width:374px;height:29px;overflow:hidden"><div class="tc tl" style="left:6px;top:4.5px">DOCUMENTACION Y CALIDAD</div></div><div class="tc tr" style="right:1603px;top:519.5px;">0,00 €</div><div class="tc tr" style="right:1472px;top:519.5px;">30,00 %</div><div class="tc tr" style="right:1341px;top:519.5px;">0,00 €</div><div class="tc tr" style="right:1209px;top:519.5px;">0</div><div class="tc tr" style="right:1078px;top:519.5px;">21,00 €</div><div class="tc tr" style="right:947px;top:519.5px;">0,00 €</div><div class="tc tr" style="right:816px;top:519.5px;">35,00 €</div><div class="tc tr" style="right:684px;top:519.5px;">0,00 €</div><div class="tc tr" style="right:553px;top:519.5px;">0,00 €</div><div class="tc tr" style="right:422px;top:519.5px;">0,00 €</div><div class="tc tr" style="right:291px;top:519.5px;">0,00 €</div><div class="tc tl" style="left:2273px;top:519.5px">#DIV0</div><div class="tc tr tb" style="right:2109px;top:549.5px;color:#3a3a3a;transform:none;font-size:15.5px">13</div><div class="abs" style="left:449px;top:545px;width:374px;height:29px;overflow:hidden"><div class="tc tl" style="left:6px;top:4.5px">DIETAS Y DESPLAZAMIENTOS - (Vueloas, hoteles, dietas...)</div></div><div class="tc tr" style="right:1603px;top:549.5px;">0,00 €</div><div class="tc tr" style="right:1472px;top:549.5px;">30,00 %</div><div class="tc tr" style="right:1341px;top:549.5px;">0,00 €</div><div class="tc tr" style="right:1209px;top:549.5px;">0</div><div class="tc tr" style="right:1078px;top:549.5px;">21,00 €</div><div class="tc tr" style="right:947px;top:549.5px;">0,00 €</div><div class="tc tr" style="right:816px;top:549.5px;">35,00 €</div><div class="tc tr" style="right:684px;top:549.5px;">0,00 €</div><div class="tc tr" style="right:553px;top:549.5px;">0,00 €</div><div class="tc tr" style="right:422px;top:549.5px;">0,00 €</div><div class="tc tr" style="right:291px;top:549.5px;">0,00 €</div><div class="tc tl" style="left:2273px;top:549.5px">#DIV0</div><div class="tc tr tb" style="right:2109px;top:579.5px;color:#3a3a3a;transform:none;font-size:15.5px">14</div><div class="abs" style="left:449px;top:575px;width:374px;height:29px;overflow:hidden"><div class="tc tl" style="left:6px;top:4.5px">PARTIDA PERSONALIZADA 1</div></div><div class="tc tr" style="right:1603px;top:579.5px;">0,00 €</div><div class="tc tr" style="right:1472px;top:579.5px;">30,00 %</div><div class="tc tr" style="right:1341px;top:579.5px;">0,00 €</div><div class="tc tr" style="right:1209px;top:579.5px;">0</div><div class="tc tr" style="right:1078px;top:579.5px;">21,00 €</div><div class="tc tr" style="right:947px;top:579.5px;">0,00 €</div><div class="tc tr" style="right:816px;top:579.5px;">35,00 €</div><div class="tc tr" style="right:684px;top:579.5px;">0,00 €</div><div class="tc tr" style="right:553px;top:579.5px;">0,00 €</div><div class="tc tr" style="right:422px;top:579.5px;">0,00 €</div><div class="tc tr" style="right:291px;top:579.5px;">0,00 €</div><div class="tc tl" style="left:2273px;top:579.5px">#DIV0</div><div class="tc tr tb" style="right:2109px;top:609.5px;color:#3a3a3a;transform:none;font-size:15.5px">15</div><div class="abs" style="left:449px;top:605px;width:374px;height:29px;overflow:hidden"><div class="tc tl" style="left:6px;top:4.5px">PARTIDA PERSONALIZADA 2</div></div><div class="tc tr" style="right:1603px;top:609.5px;">0,00 €</div><div class="tc tr" style="right:1472px;top:609.5px;">30,00 %</div><div class="tc tr" style="right:1341px;top:609.5px;">0,00 €</div><div class="tc tr" style="right:1209px;top:609.5px;">0</div><div class="tc tr" style="right:1078px;top:609.5px;">21,00 €</div><div class="tc tr" style="right:947px;top:609.5px;">0,00 €</div><div class="tc tr" style="right:816px;top:609.5px;">35,00 €</div><div class="tc tr" style="right:684px;top:609.5px;">0,00 €</div><div class="tc tr" style="right:553px;top:609.5px;">0,00 €</div><div class="tc tr" style="right:422px;top:609.5px;">0,00 €</div><div class="tc tr" style="right:291px;top:609.5px;">0,00 €</div><div class="tc tl" style="left:2273px;top:609.5px">#DIV0</div><div class="tc tr tb" style="right:2109px;top:639.5px;color:#3a3a3a;transform:none;font-size:15.5px">16</div><div class="abs" style="left:449px;top:635px;width:374px;height:29px;overflow:hidden"><div class="tc tl" style="left:6px;top:4.5px">PARTIDA PERSONALIZADA 3</div></div><div class="tc tr" style="right:1603px;top:639.5px;">0,00 €</div><div class="tc tr" style="right:1472px;top:639.5px;">30,00 %</div><div class="tc tr" style="right:1341px;top:639.5px;">0,00 €</div><div class="tc tr" style="right:1209px;top:639.5px;">0</div><div class="tc tr" style="right:1078px;top:639.5px;">21,00 €</div><div class="tc tr" style="right:947px;top:639.5px;">0,00 €</div><div class="tc tr" style="right:816px;top:639.5px;">35,00 €</div><div class="tc tr" style="right:684px;top:639.5px;">0,00 €</div><div class="tc tr" style="right:553px;top:639.5px;">0,00 €</div><div class="tc tr" style="right:422px;top:639.5px;">0,00 €</div><div class="tc tr" style="right:291px;top:639.5px;">0,00 €</div><div class="tc tl" style="left:2273px;top:639.5px">#DIV0</div><div class="tc tr tb" style="right:2109px;top:669.5px;color:#3a3a3a;transform:none;font-size:15.5px">17</div><div class="abs" style="left:449px;top:665px;width:374px;height:29px;overflow:hidden"><div class="tc tl" style="left:6px;top:4.5px">PARTIDA PERSONALIZADA 4</div></div><div class="tc tr" style="right:1603px;top:669.5px;">0,00 €</div><div class="tc tr" style="right:1472px;top:669.5px;">30,00 %</div><div class="tc tr" style="right:1341px;top:669.5px;">0,00 €</div><div class="tc tr" style="right:1209px;top:669.5px;">0</div><div class="tc tr" style="right:1078px;top:669.5px;">21,00 €</div><div class="tc tr" style="right:947px;top:669.5px;">0,00 €</div><div class="tc tr" style="right:816px;top:669.5px;">35,00 €</div><div class="tc tr" style="right:684px;top:669.5px;">0,00 €</div><div class="tc tr" style="right:553px;top:669.5px;">0,00 €</div><div class="tc tr" style="right:422px;top:669.5px;">0,00 €</div><div class="tc tr" style="right:291px;top:669.5px;">0,00 €</div><div class="tc tl" style="left:2273px;top:669.5px">#DIV0</div><div class="tc tr tb" style="right:2109px;top:699.5px;color:#3a3a3a;transform:none;font-size:15.5px">18</div><div class="abs" style="left:449px;top:695px;width:374px;height:29px;overflow:hidden"><div class="tc tl" style="left:6px;top:4.5px">PARTIDA PERSONALIZADA 5</div></div><div class="tc tr" style="right:1603px;top:699.5px;">0,00 €</div><div class="tc tr" style="right:1472px;top:699.5px;">30,00 %</div><div class="tc tr" style="right:1341px;top:699.5px;">0,00 €</div><div class="tc tr" style="right:1209px;top:699.5px;">0</div><div class="tc tr" style="right:1078px;top:699.5px;">21,00 €</div><div class="tc tr" style="right:947px;top:699.5px;">0,00 €</div><div class="tc tr" style="right:816px;top:699.5px;">35,00 €</div><div class="tc tr" style="right:684px;top:699.5px;">0,00 €</div><div class="tc tr" style="right:553px;top:699.5px;">0,00 €</div><div class="tc tr" style="right:422px;top:699.5px;">0,00 €</div><div class="tc tr" style="right:291px;top:699.5px;">0,00 €</div><div class="tc tl" style="left:2273px;top:699.5px">#DIV0</div><div class="tc tr tb" style="right:2109px;top:729.5px;color:#3a3a3a;transform:none;font-size:15.5px">19</div><div class="abs" style="left:449px;top:725px;width:374px;height:29px;overflow:hidden"><div class="tc tl" style="left:6px;top:4.5px">PARTIDA PERSONALIZADA 6</div></div><div class="tc tr" style="right:1603px;top:729.5px;">0,00 €</div><div class="tc tr" style="right:1472px;top:729.5px;">30,00 %</div><div class="tc tr" style="right:1341px;top:729.5px;">0,00 €</div><div class="tc tr" style="right:1209px;top:729.5px;">0</div><div class="tc tr" style="right:1078px;top:729.5px;">21,00 €</div><div class="tc tr" style="right:947px;top:729.5px;">0,00 €</div><div class="tc tr" style="right:816px;top:729.5px;">35,00 €</div><div class="tc tr" style="right:684px;top:729.5px;">0,00 €</div><div class="tc tr" style="right:553px;top:729.5px;">0,00 €</div><div class="tc tr" style="right:422px;top:729.5px;">0,00 €</div><div class="tc tr" style="right:291px;top:729.5px;">0,00 €</div><div class="tc tl" style="left:2273px;top:729.5px">#DIV0</div><div class="tc tr tb" style="right:2109px;top:759.5px;color:#3a3a3a;transform:none;font-size:15.5px">20</div><div class="abs" style="left:449px;top:755px;width:374px;height:29px;overflow:hidden"><div class="tc tl" style="left:6px;top:4.5px">PARTIDA PERSONALIZADA 7</div></div><div class="tc tr" style="right:1603px;top:759.5px;">0,00 €</div><div class="tc tr" style="right:1472px;top:759.5px;">30,00 %</div><div class="tc tr" style="right:1341px;top:759.5px;">0,00 €</div><div class="tc tr" style="right:1209px;top:759.5px;">0</div><div class="tc tr" style="right:1078px;top:759.5px;">21,00 €</div><div class="tc tr" style="right:947px;top:759.5px;">0,00 €</div><div class="tc tr" style="right:816px;top:759.5px;">35,00 €</div><div class="tc tr" style="right:684px;top:759.5px;">0,00 €</div><div class="tc tr" style="right:553px;top:759.5px;">0,00 €</div><div class="tc tr" style="right:422px;top:759.5px;">0,00 €</div><div class="tc tr" style="right:291px;top:759.5px;">0,00 €</div><div class="tc tl" style="left:2273px;top:759.5px">#DIV0</div><div class="tc tr tb" style="right:2109px;top:789.5px;color:#3a3a3a;transform:none;font-size:15.5px">21</div><div class="abs" style="left:449px;top:785px;width:374px;height:29px;overflow:hidden"><div class="tc tl" style="left:6px;top:4.5px">PARTIDA PERSONALIZADA 8</div></div><div class="tc tr" style="right:1603px;top:789.5px;">0,00 €</div><div class="tc tr" style="right:1472px;top:789.5px;">30,00 %</div><div class="tc tr" style="right:1341px;top:789.5px;">0,00 €</div><div class="tc tr" style="right:1209px;top:789.5px;">0</div><div class="tc tr" style="right:1078px;top:789.5px;">21,00 €</div><div class="tc tr" style="right:947px;top:789.5px;">0,00 €</div><div class="tc tr" style="right:816px;top:789.5px;">35,00 €</div><div class="tc tr" style="right:684px;top:789.5px;">0,00 €</div><div class="tc tr" style="right:553px;top:789.5px;">0,00 €</div><div class="tc tr" style="right:422px;top:789.5px;">0,00 €</div><div class="tc tr" style="right:291px;top:789.5px;">0,00 €</div><div class="tc tl" style="left:2273px;top:789.5px">#DIV0</div><div class="tc tr tb" style="right:2109px;top:819.5px;color:#3a3a3a;transform:none;font-size:15.5px">22</div><div class="abs" style="left:449px;top:815px;width:374px;height:29px;overflow:hidden"><div class="tc tl" style="left:6px;top:4.5px">PARTIDA PERSONALIZADA 9</div></div><div class="tc tr" style="right:1603px;top:819.5px;">0,00 €</div><div class="tc tr" style="right:1472px;top:819.5px;">30,00 %</div><div class="tc tr" style="right:1341px;top:819.5px;">0,00 €</div><div class="tc tr" style="right:1209px;top:819.5px;">0</div><div class="tc tr" style="right:1078px;top:819.5px;">21,00 €</div><div class="tc tr" style="right:947px;top:819.5px;">0,00 €</div><div class="tc tr" style="right:816px;top:819.5px;">35,00 €</div><div class="tc tr" style="right:684px;top:819.5px;">0,00 €</div><div class="tc tr" style="right:553px;top:819.5px;">0,00 €</div><div class="tc tr" style="right:422px;top:819.5px;">0,00 €</div><div class="tc tr" style="right:291px;top:819.5px;">0,00 €</div><div class="tc tl" style="left:2273px;top:819.5px">#DIV0</div><div class="tc tr tb" style="right:2109px;top:849.5px;color:#3a3a3a;transform:none;font-size:15.5px">23</div><div class="abs" style="left:449px;top:845px;width:374px;height:29px;overflow:hidden"><div class="tc tl" style="left:6px;top:4.5px">PARTIDA PERSONALIZADA 10</div></div><div class="tc tr" style="right:1603px;top:849.5px;">0,00 €</div><div class="tc tr" style="right:1472px;top:849.5px;">30,00 %</div><div class="tc tr" style="right:1341px;top:849.5px;">0,00 €</div><div class="tc tr" style="right:1209px;top:849.5px;">0</div><div class="tc tr" style="right:1078px;top:849.5px;">21,00 €</div><div class="tc tr" style="right:947px;top:849.5px;">0,00 €</div><div class="tc tr" style="right:816px;top:849.5px;">35,00 €</div><div class="tc tr" style="right:684px;top:849.5px;">0,00 €</div><div class="tc tr" style="right:553px;top:849.5px;">0,00 €</div><div class="tc tr" style="right:422px;top:849.5px;">0,00 €</div><div class="tc tr" style="right:291px;top:849.5px;">0,00 €</div><div class="tc tl" style="left:2273px;top:849.5px">#DIV0</div><div class="tc tl tb" style="left:380px;top:880px;color:#333;transform:scaleX(.86)">TOTALES</div><div class="tc tr tb" style="right:1603px;top:880px;transform:scaleX(.98);">1.626,00 €</div><div class="tc tr tb" style="right:1341px;top:880px;transform:scaleX(.98);">2.113,80 €</div><div class="tc tr tb" style="right:1209px;top:880px;transform:scaleX(.98);">0</div><div class="tc tr tb" style="right:947px;top:880px;transform:scaleX(.98);">0,00 €</div><div class="tc tr tb" style="right:684px;top:880px;transform:scaleX(.98);">0,00 €</div><div class="tc tr tb" style="right:553px;top:880px;transform:scaleX(.98);">1.626,00 €</div><div class="tc tr tb" style="right:422px;top:880px;transform:scaleX(.98);">2.113,80 €</div><div class="tc tr tb" style="right:291px;top:880px;transform:scaleX(.98);">487,80 €</div><div class="tc tr tb" style="right:159px;top:880px;transform:scaleX(.98);">23,08 %</div><div class="t" style="left:373px;top:925px;font-size:20px;line-height:24px;color:#212529">Datos Oferta</div><div class="abs" style="left:374px;top:959px;width:2115px;height:1px;background:#c9cccf"></div><div class="lbl" style="left:373px;top:983px">Referencia</div><div class="lbl" style="left:730px;top:983px">Límite Licitación</div><div class="lbl" style="left:1088px;top:983px">Documento Trabajo</div><div class="lbl" style="left:1803px;top:983px">Documento Técnico</div><div class="inp" style="left:374px;top:1017px;width:327px;height:47px"></div><div class="itx" style="left:390px;top:1028px">SC/25-01</div><div class="inp" style="left:731px;top:1017px;width:328px;height:47px"></div><div class="itx" style="left:747px;top:1028px">0,00</div><div class="inp" style="left:1089px;top:1017px;width:506px;height:47px;overflow:hidden"><div class="fbtn" style="width:152px"></div></div><div class="itx" style="left:1105px;top:1028px">Elegir archivo</div><div class="itx" style="left:1257px;top:1028px">No se ha selecci…o ningún archivo</div><div class="inp" style="left:1804px;top:1017px;width:506px;height:47px;overflow:hidden"><div class="fbtn" style="width:152px"></div></div><div class="itx" style="left:1820px;top:1028px">Elegir archivo</div><div class="itx" style="left:1972px;top:1028px">No se ha selecci…o ningún archivo</div><div class="lbl" style="left:373px;top:1087px">Observaciones</div><div class="lbl" style="left:1445px;top:1087px">Fichero Teams</div><div class="inp" style="left:374px;top:1121px;width:1042px;height:47px"></div><div class="itx" style="left:390px;top:1132px">versión 1</div><div class="inp" style="left:1446px;top:1121px;width:1043px;height:47px"></div><div class="abs" style="left:374px;top:1198px;width:149px;height:44px;border-radius:6px;background:#2470c4"></div><div class="t" style="left:389px;top:1208px;font-size:18px;line-height:22px;color:#fff;-webkit-text-stroke:.25px #fff">Guardar oferta</div><div class="abs" style="left:2338px;top:1198px;width:151px;height:44px;border-radius:6px;background:#d63a4b"></div><svg class="abs" style="left:2354px;top:1210px" width="17" height="19" viewBox="0 0 16 18"><path d="M2 4 H14 M5.5 4 V2 H10.5 V4 M3.5 4 L4.3 16.5 H11.7 L12.5 4 M6.3 6.5 V14 M9.7 6.5 V14 M8 6.5 V14" fill="none" stroke="#fff" stroke-width="1.3"/></svg><div class="t" style="left:2372px;top:1208px;font-size:18px;line-height:22px;color:#fff;-webkit-text-stroke:.25px #fff">Borrar oferta</div><div class="abs" style="left:2320px;top:1180px;width:190px;height:75px;border:3px solid #e0161b"></div></div>
</body></html>
